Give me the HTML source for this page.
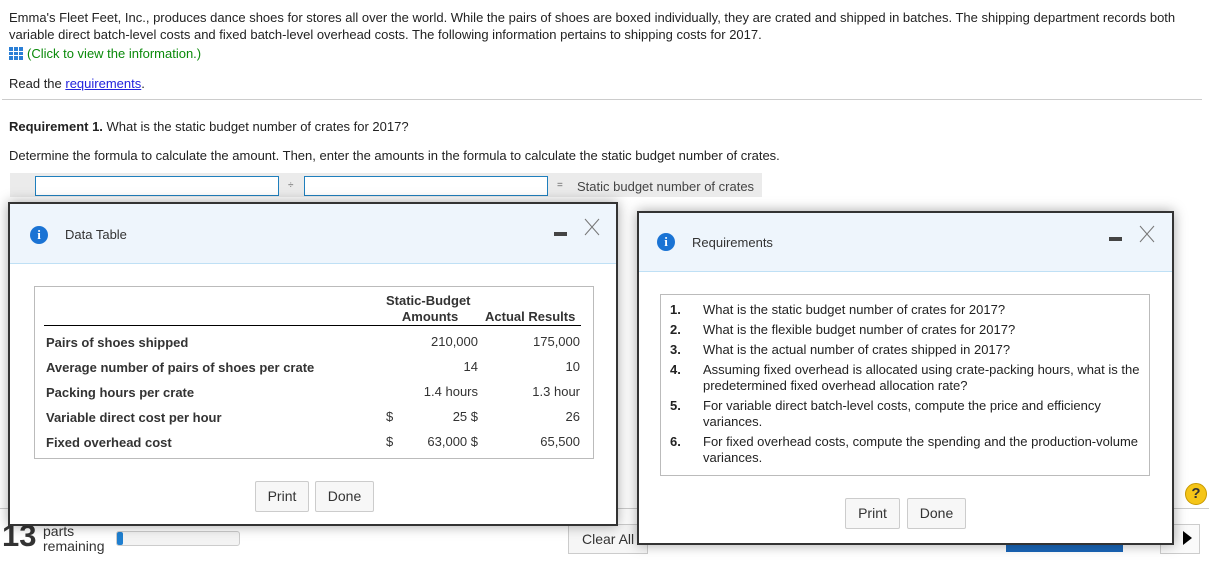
<!DOCTYPE html>
<html><head><meta charset="utf-8"><style>
*{margin:0;padding:0;box-sizing:border-box}
body{width:1209px;height:568px;overflow:hidden;background:#fff;font-family:"Liberation Sans",sans-serif;font-size:13px;color:#222;position:relative}
.a{position:absolute;white-space:nowrap}
.inp{position:absolute;background:#fff;border:1px solid #1f7fbd;height:20px}
.modal{position:absolute;background:#fff;border:2px solid #333;box-shadow:0 0 12px rgba(0,0,0,.35)}
.hd{position:absolute;left:0;right:0;top:0;background:#eef5fc;border-bottom:1px solid #bfe0f5}
.ic{position:absolute;width:18px;height:18px;border-radius:50%;background:#1a73d4;color:#fff;font:bold 13px "Liberation Serif",serif;text-align:center;line-height:18px}
.btn{position:absolute;border:1px solid #ccc;border-radius:2px;background:#f7f7f7;font-size:14px;color:#333;text-align:center;line-height:28px}
</style></head><body>
<div class="a" style="left:9px;top:10px">Emma's Fleet Feet, Inc., produces dance shoes for stores all over the world. While the pairs of shoes are boxed individually, they are crated and shipped in batches. The shipping department records both</div>
<div class="a" style="left:9px;top:27px">variable direct batch-level costs and fixed batch-level overhead costs. The following information pertains to shipping costs for 2017.</div>
<div class="a" style="left:9px;top:46px;color:#0a8a0a"><span style="display:inline-block;width:14px;height:13px;background:#2a7fd6;vertical-align:-2px;margin-right:4px;background-image:linear-gradient(90deg,transparent 4px,#fff 4px,#fff 5px,transparent 5px,transparent 9px,#fff 9px,#fff 10px,transparent 10px),linear-gradient(transparent 4px,#fff 4px,#fff 5px,transparent 5px,transparent 8px,#fff 8px,#fff 9px,transparent 9px)"></span>(Click to view the information.)</div>
<div class="a" style="left:9px;top:76px">Read the <span style="color:#2222dd;text-decoration:underline">requirements</span>.</div>
<div class="a" style="left:2px;top:99px;width:1200px;height:1px;background:#ccc"></div>
<div class="a" style="left:9px;top:119px"><b>Requirement 1.</b> What is the static budget number of crates for 2017?</div>
<div class="a" style="left:9px;top:148px">Determine the formula to calculate the amount. Then, enter the amounts in the formula to calculate the static budget number of crates.</div>
<div class="a" style="left:10px;top:173px;width:752px;height:24px;background:#ebebeb"></div>
<div class="inp" style="left:35px;top:176px;width:244px"></div>
<div class="a" style="left:288px;top:180px;font-size:10px;color:#666">÷</div>
<div class="inp" style="left:304px;top:176px;width:244px"></div>
<div class="a" style="left:557px;top:180px;font-size:10px;color:#666">=</div>
<div class="a" style="left:577px;top:179px;color:#444">Static budget number of crates</div>

<div class="a" style="left:0;top:508px;width:1209px;height:1px;background:#ccc"></div>
<div class="a" style="left:2px;top:520px;font-size:31px;font-weight:bold;color:#333;line-height:32px">13</div>
<div class="a" style="left:43px;top:524px;font-size:14px;line-height:15px;color:#333">parts<br>remaining</div>
<div class="a" style="left:116px;top:531px;width:124px;height:15px;border:1px solid #ccc;border-radius:3px;background:#f3f3f3"><div style="width:6px;height:13px;background:#1f7fd0;border-radius:2px"></div></div>
<div class="a" style="left:568px;top:524px;width:80px;height:30px;border:1px solid #ccc;background:#f6f6f6;font-size:14px;line-height:28px;padding-left:13px;color:#333">Clear All</div>
<div class="a" style="left:1006px;top:536px;width:117px;height:16px;background:#1a66b8"></div>
<div class="a" style="left:1160px;top:524px;width:40px;height:30px;border:1px solid #ccc;background:#fafafa"></div>
<div class="a" style="left:1183px;top:531px;width:0;height:0;border-left:9px solid #000;border-top:7px solid transparent;border-bottom:7px solid transparent"></div>
<div class="a" style="left:1185px;top:483px;width:22px;height:22px;border-radius:50%;background:#f5c518;border:1px solid #c99a00;text-align:center;font-weight:bold;font-size:15px;line-height:20px;color:#333">?</div>

<div class="modal" style="left:8px;top:202px;width:610px;height:324px">
 <div class="hd" style="height:60px"></div>
 <div class="ic" style="left:20px;top:22px">i</div>
 <div class="a" style="left:55px;top:23px;font-size:13px;color:#333">Data Table</div>
 <div class="a" style="left:544px;top:28px;width:13px;height:4px;background:#444"></div>
 <svg class="a" style="left:574px;top:14px" width="16" height="18"><path d="M1 1L15 17M15 1L1 17" stroke="#777" stroke-width="1"/></svg>
 <div class="a" style="left:24px;top:82px;width:560px;height:173px;border:1px solid #bbb"></div>
 <div class="a" style="left:376px;top:89px;font-weight:bold;text-align:center;line-height:16px;color:#333">Static-Budget<br>&nbsp;Amounts</div>
 <div class="a" style="left:475px;top:105px;font-weight:bold;color:#333">Actual Results</div>
 <div class="a" style="left:34px;top:121px;width:537px;height:1px;background:#000"></div>
 <div class="a" style="left:36px;top:126px;font-weight:bold;line-height:25px;color:#333">Pairs of shoes shipped<br>Average number of pairs of shoes per crate<br>Packing hours per crate<br>Variable direct cost per hour<br>Fixed overhead cost</div>
 <div class="a" style="left:360px;top:125px;width:108px;text-align:right;line-height:25px;color:#333">210,000<br>14<br>1.4 hours<br>25 $<br>63,000 $</div>
 <div class="a" style="left:470px;top:125px;width:100px;text-align:right;line-height:25px;color:#333">175,000<br>10<br>1.3 hour<br>26<br>65,500</div>
 <div class="a" style="left:376px;top:200px;line-height:25px;color:#333">$<br>$</div>
 <div class="btn" style="left:245px;top:277px;width:54px;height:31px">Print</div>
 <div class="btn" style="left:305px;top:277px;width:59px;height:31px">Done</div>
</div>

<div class="modal" style="left:637px;top:211px;width:537px;height:334px">
 <div class="hd" style="height:59px"></div>
 <div class="ic" style="left:18px;top:20px">i</div>
 <div class="a" style="left:53px;top:22px;font-size:13px;color:#333">Requirements</div>
 <div class="a" style="left:470px;top:24px;width:13px;height:4px;background:#444"></div>
 <svg class="a" style="left:500px;top:12px" width="16" height="18"><path d="M1 1L15 17M15 1L1 17" stroke="#777" stroke-width="1"/></svg>
 <div class="a" style="left:21px;top:81px;width:490px;height:182px;border:1px solid #bbb"></div>
 <div class="a" style="left:31px;top:89px;font-weight:bold;color:#222;line-height:16px">
  <div style="position:absolute;top:0">1.</div><div style="position:absolute;top:20px">2.</div><div style="position:absolute;top:40px">3.</div><div style="position:absolute;top:60px">4.</div><div style="position:absolute;top:96px">5.</div><div style="position:absolute;top:132px">6.</div></div>
 <div class="a" style="left:64px;top:89px;line-height:16px;color:#222">
  <div style="position:absolute;top:0">What is the static budget number of crates for 2017?</div>
  <div style="position:absolute;top:20px">What is the flexible budget number of crates for 2017?</div>
  <div style="position:absolute;top:40px">What is the actual number of crates shipped in 2017?</div>
  <div style="position:absolute;top:60px">Assuming fixed overhead is allocated using crate-packing hours, what is the<br>predetermined fixed overhead allocation rate?</div>
  <div style="position:absolute;top:96px">For variable direct batch-level costs, compute the price and efficiency<br>variances.</div>
  <div style="position:absolute;top:132px">For fixed overhead costs, compute the spending and the production-volume<br>variances.</div>
 </div>
 <div class="btn" style="left:206px;top:285px;width:55px;height:31px">Print</div>
 <div class="btn" style="left:268px;top:285px;width:59px;height:31px">Done</div>
</div>
</body></html>
